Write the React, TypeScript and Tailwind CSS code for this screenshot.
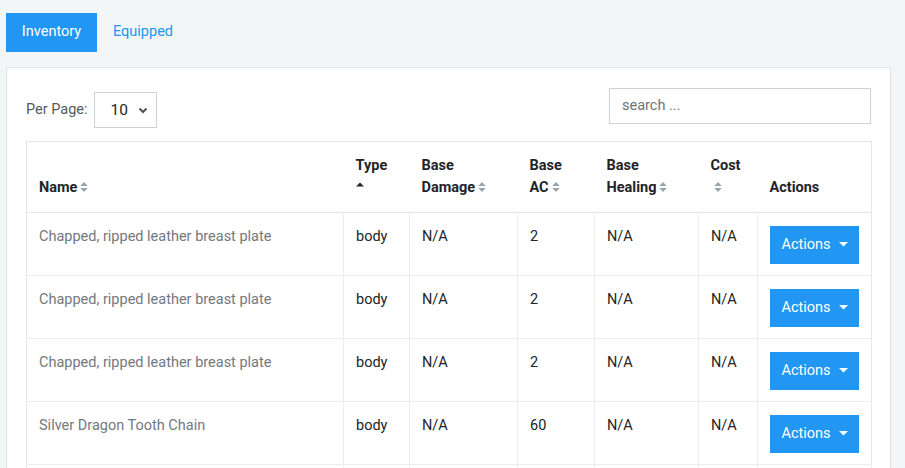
import React from 'react';

type Item = { name: string; type: string; damage: string; ac: string; healing: string; cost: string };

const ITEMS: Item[] = [
  { name: 'Chapped, ripped leather breast plate', type: 'body', damage: 'N/A', ac: '2', healing: 'N/A', cost: 'N/A' },
  { name: 'Chapped, ripped leather breast plate', type: 'body', damage: 'N/A', ac: '2', healing: 'N/A', cost: 'N/A' },
  { name: 'Chapped, ripped leather breast plate', type: 'body', damage: 'N/A', ac: '2', healing: 'N/A', cost: 'N/A' },
  { name: 'Silver Dragon Tooth Chain', type: 'body', damage: 'N/A', ac: '60', healing: 'N/A', cost: 'N/A' },
];

const SortIcon: React.FC = () => (
  <svg width="8" height="12" viewBox="0 0 8 12" className="inline-block ml-[3px] align-[-1px]">
    <path d="M0.3 5 L4 1 L7.7 5 Z" fill="#98a4ac" />
    <path d="M0.3 7 L4 11 L7.7 7 Z" fill="#98a4ac" />
  </svg>
);

const SortUp: React.FC = () => (
  <svg width="8" height="5" viewBox="0 0 8 5" className="inline-block align-[5px]">
    <path d="M0 4.5 L4 0.5 L8 4.5 Z" fill="#212529" />
  </svg>
);

const th = 'px-[12px] pt-[13px] pb-[12px] align-bottom text-left font-bold text-[#212529]';
const td = 'px-[12px] pt-[13px] pb-[11px] align-top font-normal border-l border-[#ebeef0] first:border-l-0';

const App: React.FC = () => {
  return (
    <div
      className="min-h-screen bg-[#f2f6f7] text-[14.5px] leading-[22.4px]"
      style={{ fontFamily: 'Roboto, "Liberation Sans", sans-serif' }}
    >
      <div className="flex items-center pt-[13px] pl-[6px] gap-[16px]">
        <button className="h-[39px] w-[91px] bg-[#2196f3] text-white">Inventory</button>
        <button className="text-[#2196f3]">Equipped</button>
      </div>

      <div className="mt-[15px] ml-[6px] w-[885px] bg-white border border-[#dfe4e7] px-[19px] pt-[20px] overflow-hidden h-[420px]">
        <div className="flex justify-between">
          <div className="flex items-center mt-[4px] gap-[6px] text-[#555b60]">
            <span>Per Page:</span>
            <div className="h-[36px] w-[63px] border border-[#ccd3d9] flex items-center pl-[16px] pr-[8px] justify-between text-[#212529] text-[15.5px]">
              <span>10</span>
              <svg width="10" height="7" viewBox="0 0 10 7">
                <path d="M1.5 1.5 L5 5 L8.5 1.5" stroke="#495057" strokeWidth="2" fill="none" />
              </svg>
            </div>
          </div>
          <div className="h-[36px] w-[262px] border border-[#ccd3d9] flex items-center px-[12px] text-[#6c757d]">
            search ...
          </div>
        </div>

        <table className="mt-[13px] w-[845px] table-fixed border-collapse border border-[#e3e7ea]">
          <colgroup>
            <col className="w-[317px]" />
            <col className="w-[66px]" />
            <col className="w-[108px]" />
            <col className="w-[77px]" />
            <col className="w-[104px]" />
            <col className="w-[59px]" />
            <col className="w-[114px]" />
          </colgroup>
          <thead>
            <tr className="border-b border-[#e3e7ea]">
              <th className={th}>
                Name<SortIcon />
              </th>
              <th className={th}>
                Type
                <br />
                <SortUp />
              </th>
              <th className={th}>
                Base
                <br />
                Damage<SortIcon />
              </th>
              <th className={th}>
                Base
                <br />
                AC<SortIcon />
              </th>
              <th className={th}>
                Base
                <br />
                Healing<SortIcon />
              </th>
              <th className={th}>
                Cost
                <br />
                <SortIcon />
              </th>
              <th className={th}>Actions</th>
            </tr>
          </thead>
          <tbody>
            {ITEMS.map((it, i) => (
              <tr key={i} className="border-b border-[#ebeef0]">
                <td className={`${td} text-[#73797e]`}>{it.name}</td>
                <td className={`${td} text-[#212529]`}>{it.type}</td>
                <td className={`${td} text-[#212529]`}>{it.damage}</td>
                <td className={`${td} text-[#212529]`}>{it.ac}</td>
                <td className={`${td} text-[#212529]`}>{it.healing}</td>
                <td className={`${td} text-[#212529]`}>{it.cost}</td>
                <td className={td}>
                  <button className="h-[38px] w-[89px] bg-[#2196f3] text-white flex items-center justify-center gap-[8px]">
                    <span>Actions</span>
                    <svg width="9" height="5" viewBox="0 0 9 5">
                      <path d="M0 0 L9 0 L4.5 4.5 Z" fill="#ffffff" />
                    </svg>
                  </button>
                </td>
              </tr>
            ))}
            {/* next row, cut by the window */}
            <tr className="h-[62px]">
              {[0, 1, 2, 3, 4, 5, 6].map((c) => (
                <td key={c} className={td} />
              ))}
            </tr>
          </tbody>
        </table>
      </div>
    </div>
  );
};

export default App;
